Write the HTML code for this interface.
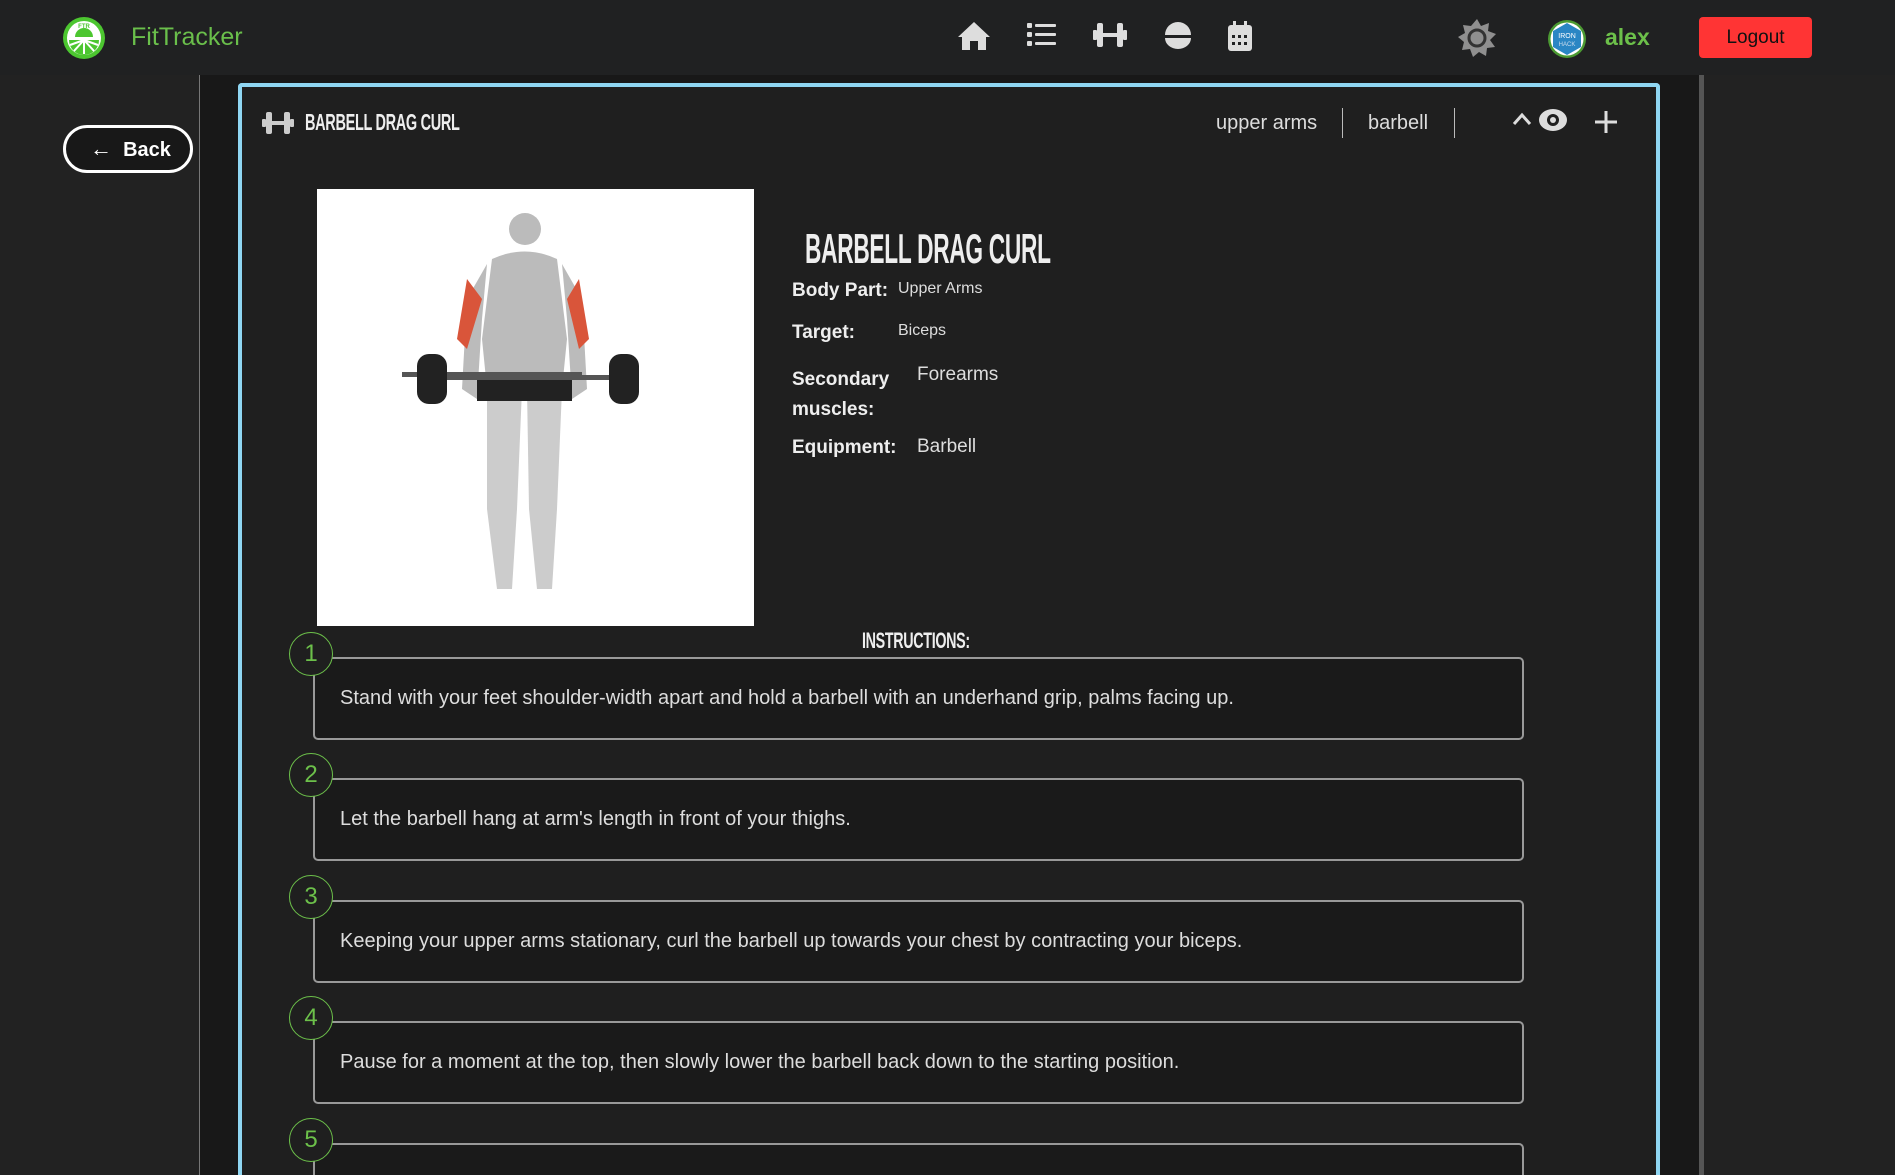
<!DOCTYPE html>
<html><head><meta charset="utf-8"><style>
*{box-sizing:border-box;margin:0;padding:0}
html{width:1895px;height:1175px;overflow:hidden}
body{width:1895px;height:1175px;overflow:hidden;background:#181818;font-family:"Liberation Sans",sans-serif;color:#ddd;position:relative}
.hdr{position:absolute;left:0;top:0;width:1895px;height:75px;background:#202122}
.side{position:absolute;left:0;top:75px;width:200px;height:1100px;background:#222;border-right:1px solid #777}
.rside{position:absolute;left:1699px;top:75px;width:196px;height:1100px;background:#222;border-left:5px solid #555}
.card{position:absolute;left:238px;top:83px;width:1422px;height:1100px;border:4px solid #8fd6f2;border-bottom:none;border-radius:4px 4px 0 0;background:#1f1f1f}
.cond{font-family:"Liberation Sans",sans-serif;font-weight:bold;display:inline-block;transform-origin:left center;letter-spacing:-0.5px;white-space:nowrap}
.abs{position:absolute}
.step{position:absolute;left:313px;width:1211px;height:83px;border:2px solid #999;border-radius:5px;background:#1a1a1a;font-size:20px;color:#ddd;padding-left:25px;line-height:79px;white-space:nowrap}
.num{position:absolute;left:289px;width:44px;height:44px;border:1.5px solid #6cc04a;border-radius:50%;background:#1f1f1f;color:#6cc04a;font-size:24px;text-align:center;line-height:42px}
.lbl{position:absolute;left:792px;font-weight:bold;font-size:19px;color:#eee}
.val{position:absolute;color:#ddd}
</style></head><body>
<div class="hdr"></div>
<svg class="abs" style="left:62px;top:16px" width="44" height="44" viewBox="0 0 44 44"><circle cx="22" cy="22" r="21" fill="#4cc630"/><circle cx="22" cy="22" r="17" fill="#fff"/><path d="M7 24 H37 A15 15 0 0 1 7 24Z" fill="#4cc630"/><path d="M22 24 L22 38 M22 24 L12 35 M22 24 L32 35 M22 24 L8 29 M22 24 L36 29" stroke="#fff" stroke-width="2"/><path d="M13 21 A9 9 0 0 1 31 21Z" fill="#4cc630"/><text x="22" y="12" font-size="6" text-anchor="middle" fill="#4cc630" font-weight="bold" font-family="Liberation Sans">FTR</text></svg>
<div class="abs" style="left:131px;top:23px;font-size:25px;color:#6abf4b">FitTracker</div>
<svg class="abs" style="left:957px;top:20px" width="34" height="32" viewBox="0 0 34 32"><path d="M17 2 L33 17 L29 17 L29 30 L21 30 L21 21 L13 21 L13 30 L5 30 L5 17 L1 17Z" fill="#ddd"/></svg>
<svg class="abs" style="left:1027px;top:22px" width="30" height="26" viewBox="0 0 30 26"><g fill="#ddd"><rect x="0" y="1" width="5" height="5" rx="1"/><rect x="0" y="10" width="5" height="5" rx="1"/><rect x="0" y="19" width="5" height="5" rx="1"/><rect x="8" y="2" width="21" height="3" rx="1"/><rect x="8" y="11" width="21" height="3" rx="1"/><rect x="8" y="20" width="21" height="3" rx="1"/></g></svg>
<svg class="abs" style="left:1092px;top:20px" width="36" height="30" viewBox="0 0 36 30"><g fill="#ddd"><rect x="5" y="3" width="6" height="24" rx="2"/><rect x="25" y="3" width="6" height="24" rx="2"/><rect x="1" y="10" width="4" height="10" rx="1"/><rect x="31" y="10" width="4" height="10" rx="1"/><rect x="11" y="13" width="14" height="4"/></g></svg>
<svg class="abs" style="left:1162px;top:20px" width="32" height="32" viewBox="0 0 32 32"><path d="M3 15 A13 13 0 0 1 29 15Z M3 18 H29 A13 11 0 0 1 3 18Z" fill="#ddd"/></svg>
<svg class="abs" style="left:1227px;top:20px" width="26" height="32" viewBox="0 0 26 32"><rect x="1" y="5" width="24" height="26" rx="3" fill="#ddd"/><rect x="6" y="1" width="3" height="7" fill="#ddd"/><rect x="17" y="1" width="3" height="7" fill="#ddd"/><g fill="#202122"><rect x="5" y="15" width="3" height="3"/><rect x="11" y="15" width="3" height="3"/><rect x="17" y="15" width="3" height="3"/><rect x="5" y="22" width="3" height="3"/><rect x="11" y="22" width="3" height="3"/><rect x="17" y="22" width="3" height="3"/></g></svg>
<svg class="abs" style="left:1457px;top:18px" width="40" height="40" viewBox="0 0 40 40"><path d="M20 1 L24 8 L32 5 L31 13 L39 16 L33 22 L38 29 L30 30 L29 38 L22 34 L16 39 L13 31 L5 32 L7 24 L1 19 L8 15 L6 7 L14 8Z" fill="#8f8f8f"/><circle cx="20" cy="20" r="8" fill="none" stroke="#333" stroke-width="3"/></svg>
<svg class="abs" style="left:1547px;top:19px" width="40" height="40" viewBox="0 0 40 40"><circle cx="20" cy="20" r="19" fill="#4b9a32"/><circle cx="20" cy="20" r="16.5" fill="#fff"/><path d="M20 4 L34 12 L34 28 L20 36 L6 28 L6 12Z" fill="#2a86c4"/><text x="20" y="19" font-size="7" text-anchor="middle" fill="#fff" font-family="Liberation Sans">IRON</text><text x="20" y="27" font-size="6" text-anchor="middle" fill="#cde" font-family="Liberation Sans">HACK</text></svg>
<div class="abs" style="left:1605px;top:24px;font-size:23px;font-weight:bold;color:#6cc04a">alex</div>
<div class="abs" style="left:1699px;top:17px;width:113px;height:41px;background:#ff3434;border-radius:4px;color:#111;font-size:19px;text-align:center;line-height:41px">Logout</div>
<div class="side"></div>
<div class="rside"></div>
<div class="abs" style="left:63px;top:125px;width:130px;height:48px;border:3px solid #fff;border-radius:24px;background:#181818;color:#fff;font-weight:bold;font-size:20px;line-height:42px;padding-left:24px"><span style="font-size:22px">&#8592;</span>&nbsp; Back</div>
<div class="card"></div>
<svg class="abs" style="left:262px;top:111px" width="32" height="24" viewBox="0 0 32 24"><g fill="#ccc"><rect x="4" y="1" width="6" height="22" rx="2"/><rect x="22" y="1" width="6" height="22" rx="2"/><rect x="0" y="8" width="4" height="8" rx="1"/><rect x="28" y="8" width="4" height="8" rx="1"/><rect x="10" y="10" width="12" height="4"/></g></svg>
<div class="abs cond" style="left:305px;top:109px;font-size:23px;color:#eee;transform:scaleX(0.63)">BARBELL DRAG CURL</div>
<div class="abs" style="left:1216px;top:112px;font-size:20px;color:#ddd">upper arms</div>
<div class="abs" style="left:1342px;top:108px;width:1px;height:30px;background:#bbb"></div>
<div class="abs" style="left:1368px;top:112px;font-size:20px;color:#ddd">barbell</div>
<div class="abs" style="left:1454px;top:108px;width:1px;height:30px;background:#bbb"></div>
<svg class="abs" style="left:1512px;top:112px" width="20" height="14" viewBox="0 0 20 14"><path d="M2 12 L10 3 L18 12" stroke="#ddd" stroke-width="3" fill="none"/></svg>
<svg class="abs" style="left:1538px;top:108px" width="30" height="24" viewBox="0 0 30 24"><ellipse cx="15" cy="12" rx="14" ry="11" fill="#ddd"/><circle cx="15" cy="12" r="6" fill="#1f1f1f"/><circle cx="15" cy="12" r="3" fill="#ddd"/></svg>
<svg class="abs" style="left:1594px;top:110px" width="24" height="24" viewBox="0 0 24 24"><path d="M12 1 V23 M1 12 H23" stroke="#ddd" stroke-width="3"/></svg>
<div class="abs" style="left:317px;top:189px;width:437px;height:437px;background:#fff">
<svg width="437" height="437" viewBox="0 0 437 437"><g fill="#bbb"><circle cx="208" cy="40" r="16"/><path d="M175 70 Q208 55 240 70 L250 150 L245 200 L170 200 L165 150Z"/><path d="M170 75 L150 110 L145 200 L160 210 L165 130Z"/><path d="M245 75 L265 110 L270 200 L255 210 L250 130Z"/><path d="M170 200 L205 200 L200 320 L195 400 L180 400 L170 320Z" fill="#ccc"/><path d="M210 200 L245 200 L240 320 L235 400 L220 400 L212 320Z" fill="#ccc"/></g><path d="M150 90 L140 150 L150 160 L165 110Z M262 90 L272 150 L262 160 L250 110Z" fill="#d9553a"/><rect x="160" y="190" width="95" height="22" fill="#222"/><rect x="85" y="183" width="180" height="5" fill="#555"/><rect x="100" y="165" width="30" height="50" rx="12" fill="#222"/><rect x="292" y="165" width="30" height="50" rx="12" fill="#222"/><rect x="130" y="186" width="162" height="5" fill="#555"/></svg></div>
<div class="abs cond" style="left:805px;top:225px;font-size:42px;color:#eee;transform:scaleX(0.54)">BARBELL DRAG CURL</div>
<div class="lbl" style="top:280px">Body Part:</div><div class="val" style="left:898px;top:280px;font-size:16px">Upper Arms</div>
<div class="lbl" style="top:322px">Target:</div><div class="val" style="left:898px;top:322px;font-size:16px">Biceps</div>
<div class="lbl" style="top:365px;line-height:30px">Secondary<br>muscles:</div><div class="val" style="left:917px;top:364px;font-size:19px">Forearms</div>
<div class="lbl" style="top:437px">Equipment:</div><div class="val" style="left:917px;top:436px;font-size:19px">Barbell</div>
<div class="abs cond" style="left:862px;top:628px;font-size:22px;color:#eee;transform:scaleX(0.65)">INSTRUCTIONS:</div>
<div class="step" style="top:657px">Stand with your feet shoulder-width apart and hold a barbell with an underhand grip, palms facing up.</div>
<div class="num" style="top:632px">1</div>
<div class="step" style="top:778px">Let the barbell hang at arm's length in front of your thighs.</div>
<div class="num" style="top:753px">2</div>
<div class="step" style="top:900px">Keeping your upper arms stationary, curl the barbell up towards your chest by contracting your biceps.</div>
<div class="num" style="top:875px">3</div>
<div class="step" style="top:1021px">Pause for a moment at the top, then slowly lower the barbell back down to the starting position.</div>
<div class="num" style="top:996px">4</div>
<div class="step" style="top:1143px;height:40px"></div>
<div class="num" style="top:1118px">5</div>
</body></html>
